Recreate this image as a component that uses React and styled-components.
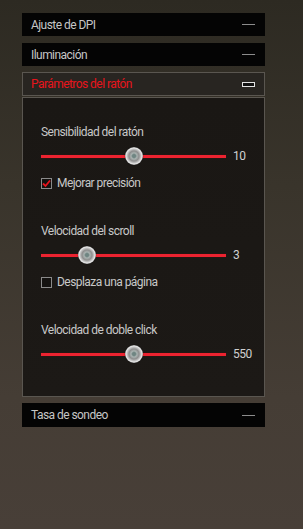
import styled, { createGlobalStyle } from 'styled-components';

const GlobalStyle = createGlobalStyle`
	html, body {
		margin: 0;
		padding: 0;
		height: 100%;
	}
	body {
		background: linear-gradient(180deg, #2d2a22 0%, #39342b 35%, #453d35 75%, #483f38 100%);
		font-family: Roboto, 'Liberation Sans', Arial, sans-serif;
		font-size: 12px;
		letter-spacing: -0.55px;
		color: #c9c9c9;
	}
`;

const Page = styled.div`
	width: 303px;
	height: 529px;
	padding: 13px 0 0 22px;
	box-sizing: border-box;
`;

const Column = styled.div`
	width: 243px;
	display: flex;
	flex-direction: column;
`;

const Bar = styled.div`
	display: flex;
	align-items: center;
	justify-content: space-between;
	box-sizing: border-box;
	height: ${(p) => p.$h || 23}px;
	margin-top: ${(p) => p.$mt || 0}px;
	padding: 0 9px 0 9px;
	background: ${(p) => (p.$open ? '#282521' : '#040404')};
	border: ${(p) => (p.$open ? '1px solid #5a5650' : 'none')};
	color: ${(p) => (p.$open ? '#e8141c' : '#c6c6c6')};
	padding-left: ${(p) => (p.$open ? 8 : 9)}px;
`;

const Dash = styled.span`
	display: block;
	width: 13px;
	height: 1px;
	background: #8c8c8c;
	margin-right: 1px;
`;

const Box = styled.span`
	display: block;
	box-sizing: border-box;
	width: 13px;
	height: 5px;
	border: 1px solid #e2e2e2;
	background: #111;
`;

const Panel = styled.div`
	margin-top: 1px;
	box-sizing: border-box;
	height: 300px;
	border: 1px solid #5a5650;
	background: linear-gradient(180deg, #1a1714 0%, #1c1916 100%);
	padding: 27px 0 0 18px;
`;

const Section = styled.div`
	display: flex;
	flex-direction: column;
	margin-bottom: 34px;
`;

const Label = styled.div`
	height: 14px;
	line-height: 14px;
	color: #c8c8c8;
`;

const SliderRow = styled.div`
	display: flex;
	align-items: center;
	height: 18px;
	margin-top: 8px;
`;

const Track = styled.div`
	position: relative;
	width: 185px;
	height: 3px;
	background: #ec2330;
	box-shadow: 0 0 1px #7a0c12;
`;

const Thumb = styled.div`
	position: absolute;
	top: 50%;
	width: 18px;
	height: 18px;
	margin: -9px 0 0 -9px;
	border-radius: 50%;
	background:
		radial-gradient(circle at 50% 50%, #6f8582 0 1.5px, #a9b2b0 3px, #8d8d8d 5px, #b9b9b9 6.5px, #e6e6e6 8px, #9a9a9a 9px);
	box-shadow: 0 0 1px #000;
`;

const Value = styled.div`
	margin-left: 7px;
	color: #d0d0d0;
`;

const CheckRow = styled.label`
	display: flex;
	align-items: center;
	height: 14px;
	margin-top: 11px;
	gap: 5px;
	color: #c8c8c8;
`;

const Check = styled.span`
	display: flex;
	align-items: center;
	justify-content: center;
	box-sizing: border-box;
	width: 11px;
	height: 11px;
	border: 1px solid #8a8a8a;
	background: #141210;
`;

const Slider = ({ pos, value }) => (
	<SliderRow>
		<Track>
			<Thumb style={{ left: `${pos * 100}%` }} />
		</Track>
		<Value>{value}</Value>
	</SliderRow>
);

const CheckBox = ({ checked, text }) => (
	<CheckRow>
		<Check>
			{checked && (
				<svg width="9" height="9" viewBox="0 0 9 9">
					<path d="M1 4.5 L3.5 7 L8 1.5" fill="none" stroke="#e8141c" strokeWidth="1.8" />
				</svg>
			)}
		</Check>
		{text}
	</CheckRow>
);

const App = () => {
	return (
		<Page>
			<GlobalStyle />
			<Column>
				<Bar>
					Ajuste de DPI
					<Dash />
				</Bar>
				<Bar $mt={7}>
					Iluminación
					<Dash />
				</Bar>
				<Bar $mt={6} $open $h={24}>
					Parámetros del ratón
					<Box />
				</Bar>
				<Panel>
					<Section>
						<Label>Sensibilidad del ratón</Label>
						<Slider pos={0.5} value="10" />
						<CheckBox checked text="Mejorar precisión" />
					</Section>
					<Section>
						<Label>Velocidad del scroll</Label>
						<Slider pos={0.25} value="3" />
						<CheckBox text="Desplaza una página" />
					</Section>
					<Section>
						<Label>Velocidad de doble click</Label>
						<Slider pos={0.5} value="550" />
					</Section>
				</Panel>
				<Bar $mt={6} $h={24}>
					Tasa de sondeo
					<Dash />
				</Bar>
			</Column>
		</Page>
	);
};

export default App;
